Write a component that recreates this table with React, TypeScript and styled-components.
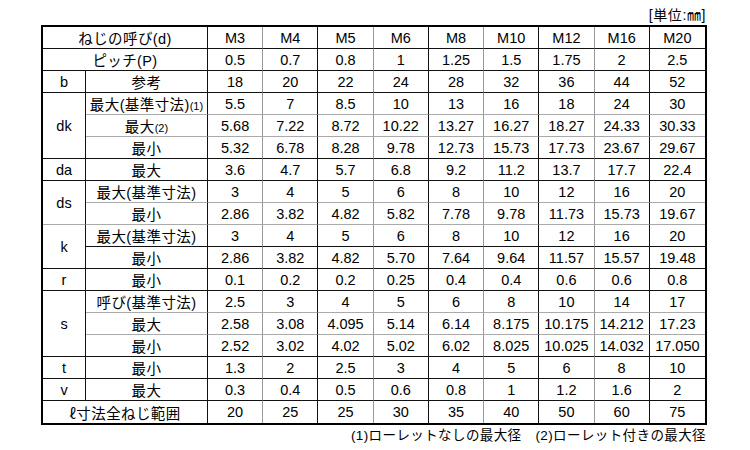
import React from 'react';
import styled, { createGlobalStyle } from 'styled-components';

const GlobalStyle = createGlobalStyle`
  html, body {
    margin: 0;
    padding: 0;
    background: #fff;
  }
  body {
    font-family: "Liberation Sans", "Noto Sans CJK JP", sans-serif;
    color: #000;
  }
`;

const Page = styled.div`
  width: 750px;
  height: 450px;
  padding: 6px 43px 0 41px;
  box-sizing: border-box;
  display: flex;
  flex-direction: column;
`;

const Unit = styled.div`
  align-self: flex-end;
  font-size: 14px;
  line-height: 19px;
  letter-spacing: 0.6px;
  margin-right: 1px;
`;

const Grid = styled.div`
  display: grid;
  grid-template-columns: 43px 122px repeat(9, 1fr);
  grid-template-rows: repeat(18, 1fr);
  width: 666px;
  height: 400px;
  border: 2px solid #000;
  box-sizing: border-box;
`;

const Cell = styled.div<{
  $wide?: number;
  $tall?: number;
  $softBottom?: boolean;
  $softRight?: boolean;
  $last?: boolean;
  $bottom?: boolean;
}>`
  grid-column: span ${(p) => p.$wide ?? 1};
  grid-row: span ${(p) => p.$tall ?? 1};
  display: flex;
  align-items: center;
  justify-content: center;
  font-size: 14.5px;
  white-space: nowrap;
  border-right: ${(p) => (p.$last ? 'none' : `1px solid ${p.$softRight ? '#999' : '#111'}`)};
  border-bottom: ${(p) => (p.$bottom ? 'none' : `1px solid ${p.$softBottom ? '#aaa' : '#111'}`)};
`;

const Label = styled.span`
  font-size: 14.5px;
  letter-spacing: 0.4px;
`;

const Small = styled.span`
  font-size: 11px;
  letter-spacing: 0;
`;

const Ell = styled.span`
  font-family: "Noto Sans CJK JP", sans-serif;
`;

const Note = styled.div`
  align-self: flex-end;
  font-size: 13.5px;
  line-height: 22px;
  letter-spacing: 0.4px;
  margin-right: 1px;
`;

const sizes = ['M3', 'M4', 'M5', 'M6', 'M8', 'M10', 'M12', 'M16', 'M20'];

type Row = {
  group?: string;
  span?: number;
  label: React.ReactNode;
  values: string[];
  soft?: boolean;
};

const rows: Row[] = [
  { label: 'ピッチ(P)', values: ['0.5', '0.7', '0.8', '1', '1.25', '1.5', '1.75', '2', '2.5'] },
  { group: 'b', span: 1, label: '参考', values: ['18', '20', '22', '24', '28', '32', '36', '44', '52'] },
  {
    group: 'dk',
    span: 3,
    label: (
      <>
        最大(基準寸法)<Small>(1)</Small>
      </>
    ),
    values: ['5.5', '7', '8.5', '10', '13', '16', '18', '24', '30'],
    soft: true,
  },
  {
    label: (
      <>
        最大<Small>(2)</Small>
      </>
    ),
    values: ['5.68', '7.22', '8.72', '10.22', '13.27', '16.27', '18.27', '24.33', '30.33'],
    soft: true,
  },
  { label: '最小', values: ['5.32', '6.78', '8.28', '9.78', '12.73', '15.73', '17.73', '23.67', '29.67'] },
  { group: 'da', span: 1, label: '最大', values: ['3.6', '4.7', '5.7', '6.8', '9.2', '11.2', '13.7', '17.7', '22.4'] },
  { group: 'ds', span: 2, label: '最大(基準寸法)', values: ['3', '4', '5', '6', '8', '10', '12', '16', '20'], soft: true },
  { label: '最小', values: ['2.86', '3.82', '4.82', '5.82', '7.78', '9.78', '11.73', '15.73', '19.67'], soft: true },
  { group: 'k', span: 2, label: '最大(基準寸法)', values: ['3', '4', '5', '6', '8', '10', '12', '16', '20'] },
  { label: '最小', values: ['2.86', '3.82', '4.82', '5.70', '7.64', '9.64', '11.57', '15.57', '19.48'] },
  { group: 'r', span: 1, label: '最小', values: ['0.1', '0.2', '0.2', '0.25', '0.4', '0.4', '0.6', '0.6', '0.8'] },
  { group: 's', span: 3, label: '呼び(基準寸法)', values: ['2.5', '3', '4', '5', '6', '8', '10', '14', '17'], soft: true },
  { label: '最大', values: ['2.58', '3.08', '4.095', '5.14', '6.14', '8.175', '10.175', '14.212', '17.23'], soft: true },
  { label: '最小', values: ['2.52', '3.02', '4.02', '5.02', '6.02', '8.025', '10.025', '14.032', '17.050'] },
  { group: 't', span: 1, label: '最小', values: ['1.3', '2', '2.5', '3', '4', '5', '6', '8', '10'] },
  { group: 'v', span: 1, label: '最大', values: ['0.3', '0.4', '0.5', '0.6', '0.8', '1', '1.2', '1.6', '2'] },
  {
    label: (
      <>
        <Ell>ℓ</Ell>寸法全ねじ範囲
      </>
    ),
    values: ['20', '25', '25', '30', '35', '40', '50', '60', '75'],
  },
];

export default function App() {
  return (
    <>
      <GlobalStyle />
      <Page>
        <Unit>[単位:㎜]</Unit>
        <Grid>
          <Cell $wide={2}>
            <Label>ねじの呼び(d)</Label>
          </Cell>
          {sizes.map((s, i) => (
            <Cell key={s} $softRight={i % 2 === 0} $last={i === 8}>
              {s}
            </Cell>
          ))}
          {rows.map((row, r) => {
            const isLast = r === rows.length - 1;
            const full = row.group === undefined && (r === 0 || isLast);
            return (
              <React.Fragment key={r}>
                {row.group !== undefined && (
                  <Cell $tall={row.span} $bottom={isLast} $softBottom={row.group === 'ds'}>
                    {row.group}
                  </Cell>
                )}
                <Cell $wide={full ? 2 : 1} $softBottom={row.soft} $bottom={isLast}>
                  <Label>{row.label}</Label>
                </Cell>
                {row.values.map((v, i) => (
                  <Cell key={i} $softRight={i % 2 === 0} $last={i === 8} $softBottom={row.soft} $bottom={isLast}>
                    {v}
                  </Cell>
                ))}
              </React.Fragment>
            );
          })}
        </Grid>
        <Note>(1)ローレットなしの最大径　(2)ローレット付きの最大径</Note>
      </Page>
    </>
  );
}
